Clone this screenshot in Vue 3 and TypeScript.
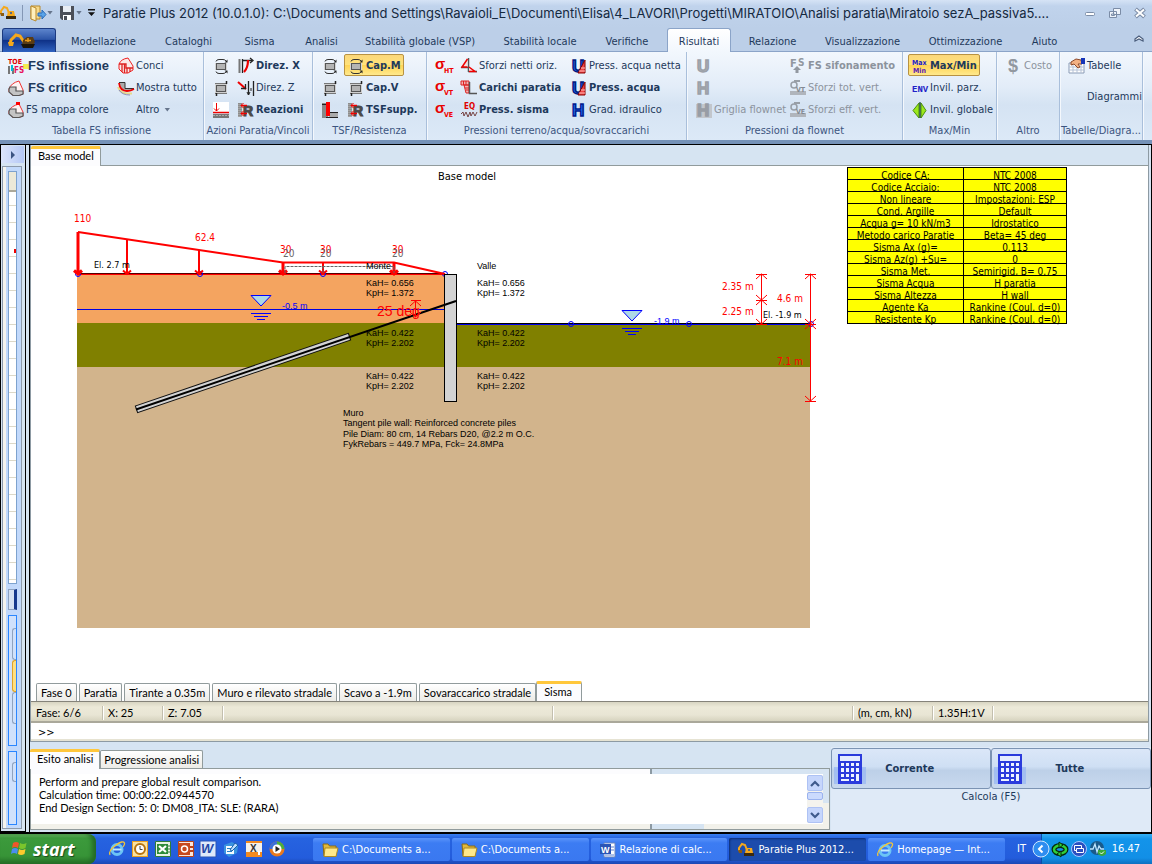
<script setup lang="ts">
import { ref } from 'vue'

interface RibbonItem {
  text?: string
  icon?: string
  title?: string
  bold?: boolean
  big?: boolean
  on?: boolean
  off?: boolean
  arrow?: boolean
  tall?: boolean
}
interface RibbonGroup {
  label: string
  key: string
  cols: RibbonItem[][]
}

const title =
  'Paratie Plus 2012 (10.0.1.0): C:\\Documents and Settings\\Ravaioli_E\\Documenti\\Elisa\\4_LAVORI\\Progetti\\MIRATOIO\\Analisi paratia\\Miratoio sezA_passiva5....'

const menuTabs = [
  'Modellazione', 'Cataloghi', 'Sisma', 'Analisi', 'Stabilità globale (VSP)', 'Stabilità locale',
  'Verifiche', 'Risultati', 'Relazione', 'Visualizzazione', 'Ottimizzazione', 'Aiuto',
]
const activeMenu = ref('Risultati')

const f = 'font-family="Liberation Sans" font-weight="bold"'
const fn = 'font-family="DejaVu Sans Condensed" font-weight="bold"'
const momentBox =
  '<path d="M2 5h12v7H2z" fill="#d4d4d4"/><rect x="3.500" y="5.500" width="9" height="6" fill="#b4b4b4" stroke="#555"/><path d="M3 3.500Q3.500 1.500 6 1.500H10Q12 1.500 13 3M3 13.500Q3.500 15.500 6 15.500H10Q12 15.500 13 14" fill="none" stroke="#333"/><path d="M14.500 1.500v3h-3zM14.500 15.500v-3h-3z" fill="#222"/>'
const shearBox =
  '<path d="M2 3h12v10H2z" fill="#cfcfcf"/><rect x="3.500" y="5.500" width="9" height="6" fill="#b4b4b4" stroke="#555"/><path d="M2 3.500H14M2 13.500H14" stroke="#777"/><path d="M13.500 1v3M3.500 13v3" stroke="#222" stroke-width="1.500"/>'
const reaction =
  '<path d="M0 1h4v14H0z" fill="#a4a4a4"/><path d="M1 1v14M3 1v14" stroke="#777" stroke-dasharray="1 1"/><text x="5" y="14" font-size="14" fill="#4a4a4a" stroke="#4a4a4a" ' + f + '>R</text><path d="M3 3.500H9M3 11.500H9" stroke="#e00" stroke-width="1.400"/><path d="M5.500 1 3 3.500 5.500 6M5.500 9 3 11.500 5.500 14" fill="none" stroke="#e00"/>'
const sigma = (s: string) =>
  `<text x="-1" y="11" font-size="15" fill="#e80000" ${f}>σ</text><text x="8" y="15" font-size="7" fill="#f00000" ${fn}>${s}</text>`
const letter = (c: string, fill: string, stroke: string) =>
  `<text x="1" y="14" font-size="17" fill="${fill}" stroke="${stroke}" stroke-width="1.500" ${f}>${c}</text>`

const icons: Record<string, string> = {
  toe: `<path d="M15 6h6v5h-6z" fill="#f2ee4e"/><text x="0" y="6" font-size="7" fill="#e00000" ${fn}>TOE</text><path d="M0 8h2v8H0zM4 10h2v6H4z" fill="#777"/><path d="M3 7h2v6H3z" fill="#0bd"/><text x="6" y="15" font-size="8" fill="#e8105a" ${fn}>FS</text>`,
  critico: '<path d="M1 9Q3 3 11 1L15 10V14L11 15.500H5L1 12Z" fill="#fdf3f3" stroke="#e33"/><path d="M2 7H8V11H15V14L11 15.500H5L1 12V9Z" fill="#c4c4c4" stroke="#555" stroke-width="1.200"/>',
  mappa: '<path d="M1 9Q3 4 11 2L15 10V14L11 15.500H5L1 12V9Z" fill="#fdf3f3" stroke="#e33"/><path d="M2 7H8V11H15V14L11 15.500H5L1 12V9Z" fill="#c4c4c4" stroke="#555" stroke-width="1.200"/><path d="M8 0h4v3H8z" fill="red"/>',
  conci: '<path d="M1 6Q3 1 10 0L15 8V12L10 15H5L1 11Z" fill="#fbe9e9" stroke="#e22"/><path d="M1 6H8V10H15M4 6V14M6.500 6V15M9 10V15M12 10V14" fill="none" stroke="#d22" stroke-width="1.300"/>',
  mostra: '<path d="M1 2H7V8H15V10Q9 13 5 10Q1 8 1 2" fill="#aaa"/><path d="M0 7Q3 13.500 9 13.500H14" fill="none" stroke="#e8d98a" stroke-width="2"/><path d="M1 2.500H7V8.500H16" fill="none" stroke="#333"/><path d="M1 3Q2 11 9 11Q13 11 16 9" fill="none" stroke="#e00" stroke-width="1.800"/><path d="M1 10Q4 15 12 15" fill="none" stroke="#8a90c0"/>',
  moment: momentBox,
  shear: shearBox,
  settle: '<path d="M0 0h16v11H0z" fill="#fff"/><path d="M0 10.500H16" stroke="#e00" stroke-width="1.500"/><path d="M3.500 1V9M1 6.500 3.500 9 6 6.500" fill="none" stroke="#e00"/><path d="M0 12h16v4H0z" fill="#777"/><path d="M0 13.500H16" stroke="#aaa" stroke-dasharray="2 1"/>',
  dirx: '<path d="M1.500 1V15" stroke="#777" stroke-width="2"/><path d="M4.500 1V15M4 2.500H14" stroke="#222" stroke-width="1.300"/><path d="M12 0 15 2.500 12 5" fill="none" stroke="#222" stroke-width="1.300"/><path d="M10 2Q10 10 6 14" fill="none" stroke="#e00" stroke-width="2.200"/>',
  dirz: '<path d="M0 2 8 9" stroke="#e00" stroke-width="2"/><path d="M3 8.500H7.500V4" fill="none" stroke="#222" stroke-width="1.300"/><path d="M10.500 1V15M15.500 1V16" stroke="#222" stroke-width="1.300"/><path d="M9 12 10.500 15 12 12M13 8v3" fill="none" stroke="#222"/>',
  react: reaction,
  tsf: '<path d="M0 1h6v15H0z" fill="#888"/><path d="M7 11h9v5H7z" fill="#aaa"/><path d="M4 0h4v14H4z" fill="red"/><path d="M0 2.500H4M8 10.500H16M4 15.500H16" stroke="#222"/>',
  sht: sigma('HT'),
  svt: sigma('VT'),
  sve: sigma('VE'),
  netti: '<path d="M7.500 0V14M0 9.500H7M7 13.500H16" stroke="#555" stroke-width="1.500"/><path d="M6.500 1 1 9H6.500M8 9 14 13.500H8" fill="#f6dddd" stroke="#e00" stroke-width="1.500"/>',
  carichi: '<path d="M0 1h8v4H0zM8 5h-5L5 13H8z" fill="#f2b4b4" stroke="#d22"/><path d="M2.500 1v4M5 1v4M4 8h4M5 10h3" stroke="#d22"/><path d="M8.500 2V13.500H16" fill="none" stroke="#555" stroke-width="1.500"/>',
  sismaI: `<text x="3" y="7" font-size="8" fill="#e00000" ${fn}>EQ</text><path d="M0 12l2-2 1 4 2-4 2 5 2-5 1 4 2-4 2 4 2-4" fill="none" stroke="#744"/>`,
  u: letter('U', '#2468f0', '#001a80') + '<path d="M14 2V15H7z" fill="#e44" stroke="#800"/><path d="M10 10h4M8 13h6" stroke="#fbb"/>',
  h: letter('H', '#2a7cff', '#001a90'),
  uOff: letter('U', '#a8adb4', '#9ba0a8'),
  hOff: letter('H', '#a8adb4', '#9ba0a8'),
  grid: '<path d="M0 2h16v14H0z" fill="#c2c6cc"/>' + letter('H', '#989da5', '#989da5'),
  fsOff: `<text x="0" y="9" font-size="11" fill="#9298a0" ${fn}>F</text><text x="8" y="8" font-size="10" fill="#9298a0" ${fn}>S</text><path d="M7 8 11 12H8.500V15H5.500V12H3z" fill="#9298a0"/>`,
  svtOff: `<path d="M0 11h16v4H0z" fill="#b0b5bc"/><circle cx="4" cy="5" r="3" fill="none" stroke="#989ea6" stroke-width="1.500"/><path d="M4 1h6" stroke="#989ea6" stroke-width="2"/><text x="6" y="12" font-size="7" fill="#848a92" ${fn}>VT</text>`,
  sveOff: `<path d="M0 11h16v4H0z" fill="#b0b5bc"/><circle cx="4" cy="5" r="3" fill="none" stroke="#989ea6" stroke-width="1.500"/><path d="M4 1h6" stroke="#989ea6" stroke-width="2"/><text x="6" y="12" font-size="7" fill="#848a92" ${fn}>VE</text>`,
  maxmin: `<text x="0" y="7" font-size="7" fill="#2222c8" ${fn}>Max</text><text x="1" y="15" font-size="7" fill="#5a20b8" ${fn}>Min</text>`,
  env: '<text x="0" y="12" font-size="9" fill="#2222c8" font-family="Liberation Mono" font-weight="bold">ENV</text>',
  invil: '<path d="M7 1 1 8.500 7 16zM9 1 14 8.500 9 16z" fill="#9be81c" stroke="#4b8f10"/><path d="M8 0V16" stroke="#142" stroke-width="1.200"/>',
  dollar: `<text x="2" y="14" font-size="18" fill="#9298a0" ${f}>$</text>`,
  tabella: '<path d="M0 5h15v10H0z" fill="#fff" stroke="#8a9bb5"/><path d="M0 9H15M0 12H15M4 5V15M8 5V15M12 5V15" stroke="#b5c2d6"/><path d="M2 4 7 1 12 2 13 6 9 6 11 9 9 10 5 6 2 7z" fill="#f3b183" stroke="#8c4a2c"/><path d="M12 0h4v6h-4z" fill="#1535b8"/>',
}

const ribbon: RibbonGroup[] = [
  { key: 'g1', label: 'Tabella FS infissione', cols: [
    [{ icon: 'toe', text: 'FS infissione', bold: true, big: true }, { icon: 'critico', text: 'FS critico', bold: true, big: true }, { icon: 'mappa', text: 'FS mappa colore' }],
    [{ icon: 'conci', text: 'Conci' }, { icon: 'mostra', text: 'Mostra tutto' }, { icon: 'none', text: 'Altro', arrow: true }],
  ] },
  { key: 'g2', label: 'Azioni Paratia/Vincoli', cols: [
    [{ icon: 'moment', title: 'Momento' }, { icon: 'shear', title: 'Taglio' }, { icon: 'settle', title: 'Cedimento' }],
    [{ icon: 'dirx', text: 'Direz. X', bold: true }, { icon: 'dirz', text: 'Direz. Z' }, { icon: 'react', text: 'Reazioni', bold: true }],
  ] },
  { key: 'g3', label: 'TSF/Resistenza', cols: [
    [{ icon: 'moment', title: 'Momento' }, { icon: 'shear', title: 'Taglio' }, { icon: 'tsf', title: 'TSF' }],
    [{ icon: 'moment', text: 'Cap.M', bold: true, on: true }, { icon: 'shear', text: 'Cap.V', bold: true }, { icon: 'react', text: 'TSFsupp.', bold: true }],
  ] },
  { key: 'g4', label: 'Pressioni terreno/acqua/sovraccarichi', cols: [
    [{ icon: 'sht', title: 'Sigma HT' }, { icon: 'svt', title: 'Sigma VT' }, { icon: 'sve', title: 'Sigma VE' }],
    [{ icon: 'netti', text: 'Sforzi netti oriz.' }, { icon: 'carichi', text: 'Carichi paratia', bold: true }, { icon: 'sismaI', text: 'Press. sisma', bold: true }],
    [{ icon: 'u', text: 'Press. acqua netta' }, { icon: 'u', text: 'Press. acqua', bold: true }, { icon: 'h', text: 'Grad. idraulico' }],
  ] },
  { key: 'g5', label: 'Pressioni da flownet', cols: [
    [{ icon: 'uOff', title: 'U', off: true }, { icon: 'hOff', title: 'H', off: true }, { icon: 'grid', text: 'Griglia flownet', off: true }],
    [{ icon: 'fsOff', text: 'FS sifonamento', bold: true, off: true }, { icon: 'svtOff', text: 'Sforzi tot. vert.', off: true }, { icon: 'sveOff', text: 'Sforzi eff. vert.', off: true }],
  ] },
  { key: 'g6', label: 'Max/Min', cols: [
    [{ icon: 'maxmin', text: 'Max/Min', bold: true, on: true }, { icon: 'env', text: 'Invil. parz.' }, { icon: 'invil', text: 'Invil. globale' }],
  ] },
  { key: 'g7', label: 'Altro', cols: [[{ icon: 'dollar', text: 'Costo', off: true }]] },
  { key: 'g8', label: 'Tabelle/Diagra...', cols: [[{ icon: 'tabella', text: 'Tabelle' }, { icon: 'none', text: 'Diagrammi', tall: true }]] },
]

const settings: [string, string][] = [
  ['Codice CA:', 'NTC 2008'],
  ['Codice Acciaio:', 'NTC 2008'],
  ['Non lineare', 'Impostazioni: ESP'],
  ['Cond. Argille', 'Default'],
  ['Acqua g= 10 kN/m3', 'Idrostatico'],
  ['Metodo carico Paratie', 'Beta= 45 deg'],
  ['Sisma Ax (g)=', '0.113'],
  ['Sisma Az(g) +Su=', '0'],
  ['Sisma Met.', 'Semirigid, B= 0.75'],
  ['Sisma Acqua', 'H paratia'],
  ['Sisma Altezza', 'H wall'],
  ['Agente Ka', 'Rankine (Coul. d=0)'],
  ['Resistente Kp', 'Rankine (Coul. d=0)'],
]

const stages = ['Fase 0', 'Paratia', 'Tirante a 0.35m', 'Muro e rilevato stradale', 'Scavo a -1.9m', 'Sovaraccarico stradale', 'Sisma']
const activeStage = ref('Sisma')

const loadArrows = [
  { x: 78, top: 232, w: 3 },
  { x: 127, top: 239, w: 2 },
  { x: 199, top: 250, w: 2 },
  { x: 283, top: 262, w: 3 },
  { x: 323, top: 262, w: 2 },
  { x: 394, top: 262, w: 3 },
]
const coefficients = [
  { y: 286, a: 'KaH= 0.656', p: 'KpH= 1.372' },
  { y: 336, a: 'KaH= 0.422', p: 'KpH= 2.202' },
  { y: 379, a: 'KaH= 0.422', p: 'KpH= 2.202' },
]
const wallNotes = [
  'Muro',
  'Tangent pile wall: Reinforced concrete piles',
  'Pile Diam: 80 cm, 14 Rebars D20, @2.2 m O.C.',
  'FykRebars = 449.7 MPa, Fck= 24.8MPa',
]
const waterMarks = [{ x: 261, y: 295 }, { x: 632, y: 310 }]
const crosses = [
  { x: 761, y: 274, up: true, down: false },
  { x: 761, y: 300, up: true, down: true },
  { x: 761, y: 324, up: false, down: true },
  { x: 810, y: 274, up: true, down: false },
  { x: 810, y: 324, up: true, down: true },
  { x: 810, y: 401, up: false, down: true },
]

const ie =
  '<circle cx="8" cy="8.500" r="5" fill="none" stroke="#6cc4f5" stroke-width="3"/><path d="M4 8.500H12.500" stroke="#bfe8ff" stroke-width="2"/><path d="M1 14Q-1 10 7 4Q14 -1 15.500 2Q16 3 14 6" fill="none" stroke="#f3c63a" stroke-width="1.300"/>'
const folder =
  '<path d="M1 2h5l1.500 2H14v10H2z" fill="#e2b93c" stroke="#8a6a14"/><path d="M3 6h13l-2 8.500H2z" fill="#ffe88a" stroke="#b08a20"/>'
const digger =
  '<path d="M1 9 1 6 4 2 7 3 9 8" fill="none" stroke="#f5a81c" stroke-width="2"/><path d="M0 8h4v3H1z" fill="#8a5a10"/><path d="M8 6h6l1 5H7z" fill="#f5a81c"/><path d="M10 7h2v2h-2z" fill="#5a6a80"/><path d="M6 11h10v3H6z" fill="#3a2a10"/>'
const word =
  '<path d="M4 1h11v14H4z" fill="#fff" stroke="#6a86c0"/><path d="M11 5h3M11 8h3M5 13h9" stroke="#5b7fd0"/><path d="M0 2h11v10H0z" fill="#2a55b5"/><text x="1" y="10.500" font-size="9" fill="#fff" font-family="Liberation Sans" font-weight="bold">W</text>'

const quick = [
  { name: 'Internet Explorer', svg: ie },
  { name: 'Outlook', svg: '<path d="M0 0h16v16H0z" fill="#e9a023"/><path d="M1 1h14v14H1z" fill="#fbe2a0"/><circle cx="8" cy="8" r="5" fill="#fff" stroke="#b87410" stroke-width="2"/><path d="M8 5V8.500H10.500" fill="none" stroke="#444"/>' },
  { name: 'Excel', svg: '<path d="M.5 .5h15v15H.5z" fill="#e6f2e2" stroke="#2f7d3a"/><path d="M2 3h11v10H2z" fill="#2e8b3a"/><path d="M4 5 11 11M11 5 4 11" stroke="#fff" stroke-width="2.200"/><path d="M13 5h2M13 8h2M13 11h2" stroke="#2f7d3a"/>' },
  { name: 'PowerPoint', svg: '<path d="M.5 .5h15v15H.5z" fill="#fbe6da" stroke="#b8431c"/><path d="M1 2h11v12H1z" fill="#c74a1f"/><circle cx="6.500" cy="8" r="3" fill="none" stroke="#fff" stroke-width="1.500"/><path d="M12 6h3M12 10h3" stroke="#b8431c" stroke-width="2"/>' },
  { name: 'Word', svg: '<path d="M0 0h16v16H0z" fill="#dfe9fa" stroke="#2a55b5"/><text x="1" y="12" font-size="13" font-style="italic" fill="#2448a8" font-family="Liberation Sans" font-weight="bold">W</text>' },
  { name: 'Desktop', svg: '<path d="M1 4 9 1 15 5 14 12 6 16 1 12z" fill="#3a93e0"/><path d="M3 5h8v8H3z" fill="#f4faff"/><path d="M4 7.500h5M4 10.500h5" stroke="#2a80c8"/><path d="M7 9 12 2 15 4 9 10z" fill="#bfe0ff" stroke="#1a60a8"/>' },
  { name: 'X', svg: '<path d="M0 0h16v16H0z" fill="#f58a1f"/><path d="M0 2h16v9H0z" fill="#f6f2ea"/><text x="4" y="11" font-size="10" fill="#333" font-family="Liberation Sans" font-weight="bold">X</text><path d="M12 10h2v4h-2z" fill="#fff"/>' },
  { name: 'Media Player', svg: '<circle cx="8" cy="8" r="7.500" fill="#e8791f"/><path d="M8 .5A7.500 7.500 0 0 1 15.500 8H8z" fill="#4bae3c"/><path d="M.5 8A7.500 7.500 0 0 1 8 .5V8z" fill="#3a6fd8"/><circle cx="8" cy="8" r="4.500" fill="#fff"/><path d="M6.500 5 11 8 6.500 11z" fill="#222"/>' },
]
const tasks = [
  { text: 'C:\\Documents a...', svg: folder, on: false },
  { text: 'C:\\Documents a...', svg: folder, on: false },
  { text: 'Relazione di calc...', svg: word, on: false },
  { text: 'Paratie Plus 2012...', svg: digger, on: true },
  { text: 'Homepage — Int...', svg: ie, on: false },
]
const tray = [
  { name: 'Espandi', svg: '<circle cx="8" cy="8" r="8" fill="#2f8df0" stroke="#cfe6ff"/><path d="M9.500 4.500 6 8 9.500 11.500" fill="none" stroke="#fff" stroke-width="2"/>' },
  { name: 'Rete', svg: '<ellipse cx="8" cy="8.500" rx="6" ry="4" fill="none" stroke="#062a0a" stroke-width="5"/><ellipse cx="8" cy="8.500" rx="6" ry="4" fill="none" stroke="#2fd03a" stroke-width="2.500"/><path d="M7 1 11 4 7 7zM9 16 5 13l4-3z" fill="#2fd03a" stroke="#062a0a" stroke-width="1"/>' },
  { name: 'Finestre', svg: '<circle cx="8" cy="8" r="7.500" fill="#2a4fc0" stroke="#a8c8ff"/><path d="M3.500 4.500h7v5h-7z" fill="#2a4fc0" stroke="#fff"/><path d="M5.500 7.500h7v4h-7z" fill="#2a4fc0" stroke="#fff"/>' },
  { name: 'Monitor', svg: '<circle cx="7" cy="7" r="7" fill="#1a5a8a"/><path d="M0 8h3l2-5 2 8 2-6 2 3h3" fill="none" stroke="#bfe6ff" stroke-width="1.300"/><path d="M8 9h8v4q-4 4-8 0z" fill="#3aa83a"/><path d="M10 11.500l1.500 1.500L14 10.500" fill="none" stroke="#fff"/>' },
]
const calc =
  '<path d="M0 14h32v17H0z" fill="#8fb0f5" opacity=".6"/><path d="M4 1h24v30H4z" fill="#2b3bdc"/><path d="M6 3h20v5H6z" fill="#e6edff"/><g fill="#eef3ff"><path d="M7 10h3v3H7zM12 10h3v3h-3zM17 10h3v3h-3zM22 10h3v3h-3zM7 15h3v4H7zM12 15h3v4h-3zM17 15h3v4h-3zM22 15h3v4h-3zM7 21h3v3H7zM12 21h3v3h-3zM17 21h3v3h-3zM22 21h3v7h-3zM7 26h8v2H7zM17 26h3v2h-3z"/></g>'
</script>

<template>
  <div class="desktop">
    <header class="titlebar">
      <svg class="ico" viewBox="0 0 16 16" v-html="digger"></svg>
      <span class="bar"></span>
      <button class="qa" aria-label="Apri">
        <svg class="ico" viewBox="0 0 16 16"><path d="M1 1h9v13H1z" fill="#f6d98a" stroke="#b98a2c" /><path d="M1 1 6 3V16L1 14z" fill="#fff0bd" stroke="#b98a2c" /><path d="M8 8h4V5l4 4.500-4 4.500v-3H8z" fill="#5aa4e8" stroke="#2a6cb8" /></svg>
        <i class="caret"></i>
      </button>
      <button class="qa" aria-label="Salva">
        <svg class="ico" viewBox="0 0 16 16"><path d="M1 1h14v14H3L1 13z" fill="#4b4f58" /><path d="M4 1h8v6H4z" fill="#e8edf4" /><path d="M4 10h8v5H4z" fill="#fff" /><path d="M5 11h3v4H5z" fill="#4b4f58" /></svg>
        <i class="caret"></i>
      </button>
      <button class="qa more" aria-label="Personalizza"><i class="caret dark"></i></button>
      <h1>{{ title }}</h1>
      <div class="winctl">
        <button aria-label="Riduci"><svg class="ico" viewBox="0 0 16 16"><rect x="3.500" y="7.500" width="9" height="3" rx="1" fill="#fff" stroke="#7b8ca6" /></svg></button>
        <button aria-label="Ripristina"><svg class="ico" viewBox="0 0 16 16"><path d="M6.500 3.500h7v6h-7zM2.500 6.500h7v6h-7z" fill="#eef3fa" stroke="#7b8ca6" /><path d="M4.500 9h3v1.500h-3z" fill="none" stroke="#7b8ca6" /></svg></button>
        <button aria-label="Chiudi"><svg class="ico" viewBox="0 0 16 16"><path d="M3.500 4 12.500 12M12.500 4 3.500 12" stroke="#7b8ca6" stroke-width="4" /><path d="M4 4.500 12 11.500M12 4.500 4 11.500" stroke="#fff" stroke-width="2" /></svg></button>
      </div>
    </header>

    <nav class="menu">
      <button class="appbtn" aria-label="Menu applicazione">
        <svg viewBox="0 0 28 18" width="28" height="18"><path d="M2 12 3 8 8 3 12 4 16 10" fill="none" stroke="#f5a81c" stroke-width="3" /><path d="M0 10l6 0-1 4-4 0z" fill="#f5a81c" /><path d="M15 8l4-3h6l2 5-2 3H14z" fill="#5a3c14" /><path d="M13 12h14l-2 4H15z" fill="#1c1408" /><path d="M17 8.500h6M20 6v4" stroke="#e89a18" stroke-width="1.500" /></svg>
      </button>
      <div class="tabs">
        <button v-for="t in menuTabs" :key="t" :class="{ active: t === activeMenu }" @click="activeMenu = t"><span>{{ t }}</span></button>
      </div>
      <button class="fold" aria-label="Comprimi">
        <svg viewBox="0 0 10 8" width="10" height="8"><path d="M1 4 5 1 9 4V6L5 4 1 6Z" fill="#fff" stroke="#4a5d7c" stroke-width="1.200" /></svg>
      </button>
    </nav>

    <div class="ribbon">
      <section v-for="g in ribbon" :key="g.key" class="group" :class="g.key">
        <div class="cols">
          <div v-for="(col, ci) in g.cols" :key="ci" class="col">
            <button
              v-for="(it, ii) in col"
              :key="ii"
              class="cmd"
              :class="{ bold: it.bold, big: it.big, on: it.on, tall: it.tall }"
              :disabled="it.off"
              :aria-label="it.title"
            >
              <svg class="ico" viewBox="0 0 16 16" v-html="icons[it.icon ?? 'none'] ?? ''"></svg>
              <span v-if="it.text">{{ it.text }}</span>
              <i v-if="it.arrow" class="caret"></i>
            </button>
          </div>
        </div>
        <div class="glabel">{{ g.label }}</div>
      </section>
    </div>

    <main class="work">
      <aside class="side">
        <button class="expand" aria-label="Espandi pannello"><svg viewBox="0 0 6 8" width="6" height="8"><path d="M1 0 5 4 1 8z" fill="#3b5482" /></svg></button>
        <div class="rail">
          <div class="ruler"><span class="knob"></span><span class="mark"></span></div>
          <div class="stub"></div>
          <div class="box long"><span></span><span class="gold"></span><span></span></div>
          <div class="box short"><span></span></div>
        </div>
      </aside>

      <div class="main">
        <section class="model">
          <div class="strip"><button class="xtab active">Base model</button></div>
          <div class="canvas">
            <svg class="drawing">
              <g transform="translate(-31,-166)">
                <rect x="77" y="274" width="368" height="49" fill="#f4a460" />
                <rect x="77" y="323" width="733" height="44" fill="#808000" />
                <rect x="77" y="367" width="733" height="261" fill="#d2b48c" />
                <path d="M77 309.500H445" stroke="#0000e0" />
                <path d="M457 323.500H810" stroke="#000" />
                <path d="M457 324.500H810" stroke="#0000f0" />
                <path d="M77 273.500H445" stroke="#500" />
                <path d="M77 274.500H445" stroke="#f00" />
                <g fill="none" stroke="#00f">
                  <circle v-for="x in [78, 200, 323]" :key="x" :cx="x" cy="274" r="2.500" />
                  <circle cx="445" cy="274" r="2.500" />
                  <circle cx="571" cy="324" r="2.500" />
                  <circle cx="689" cy="324" r="2.500" />
                  <circle cx="811" cy="324" r="2.500" />
                </g>
                <path d="M78 232 283 262.500H394L445 274" fill="none" stroke="#f00" stroke-width="2" />
                <g stroke="#f00" fill="none">
                  <path v-for="a in loadArrows" :key="a.x" :d="`M${a.x} ${a.top}V274M${a.x - 4} 270.500L${a.x} 274L${a.x + 4} 270.500`" :stroke-width="a.w" />
                </g>
                <path d="M285 273V266.500H394V273M323 266V273" fill="none" stroke="#666" stroke-dasharray="3 1" />
                <g class="dim red">
                  <text x="74" y="222">110</text>
                  <text x="195" y="241">62.4</text>
                  <text x="280" y="253">30</text>
                  <text x="320" y="253">30</text>
                  <text x="392" y="253">30</text>
                  <text x="722" y="290">2.35 m</text>
                  <text x="722" y="315">2.25 m</text>
                  <text x="777" y="302">4.6 m</text>
                  <text x="777" y="365">7.1 m</text>
                </g>
                <g class="dim grey">
                  <text x="283" y="257">20</text>
                  <text x="320" y="257">20</text>
                  <text x="392" y="257">20</text>
                </g>
                <rect x="444.500" y="274.500" width="12" height="127" fill="#d3d3d3" stroke="#000" />
                <path d="M136 409.500 350 336.500" stroke="#111" stroke-width="8" />
                <path d="M137 409.200 349 336.800" stroke="#d3d3d3" stroke-width="6" />
                <path d="M136 409.500 456 301" stroke="#000" stroke-width="2" />
                <g v-for="w in waterMarks" :key="w.x" stroke="#00f">
                  <path :d="`M${w.x - 10} ${w.y}.500H${w.x + 10}L${w.x} ${w.y + 11}Z`" fill="#add8e6" />
                  <path :d="`M${w.x - 10} ${w.y + 18}.500h20M${w.x - 7} ${w.y + 21}.500h14M${w.x - 4} ${w.y + 24}.500h8`" />
                </g>
                <g class="note blue"><text x="282" y="309">-0.5 m</text><text x="654" y="324">-1.9 m</text></g>
                <g stroke="#f00" fill="none">
                  <path d="M761.500 274V324M810.500 274V401" />
                  <template v-for="(c, i) in crosses" :key="i">
                    <path :d="`M${c.x - 5} ${c.y}.500h11`" />
                    <path v-if="c.up" :d="`M${c.x - 5} ${c.y + 5}L${c.x + 0.5} ${c.y}L${c.x + 6} ${c.y + 5}`" />
                    <path v-if="c.down" :d="`M${c.x - 5} ${c.y - 5}L${c.x + 0.5} ${c.y}L${c.x + 6} ${c.y - 5}`" />
                  </template>
                  <path d="M411 300.500H421M415.500 300V317M410 306 415.500 301 421 306M410 312 415.500 317 421 312" />
                </g>
                <text class="angle" x="377" y="316">25 deg</text>
                <g class="elev"><text x="94" y="268">El. 2.7 m</text><text x="763" y="318">El. -1.9 m</text></g>
                <g class="note">
                  <text x="366" y="269">Monte</text>
                  <text x="477" y="269">Valle</text>
                  <template v-for="k in coefficients" :key="k.y">
                    <text x="366" :y="k.y">{{ k.a }}</text><text x="366" :y="k.y + 10">{{ k.p }}</text>
                    <text x="477" :y="k.y">{{ k.a }}</text><text x="477" :y="k.y + 10">{{ k.p }}</text>
                  </template>
                  <text v-for="(n, i) in wallNotes" :key="n" x="343" :y="416 + Math.round(i * 10.4)">{{ n }}</text>
                </g>
                <text class="heading" x="438" y="180">Base model</text>
              </g>
            </svg>
            <table class="settings">
              <tbody>
                <tr v-for="(r, i) in settings" :key="i"><th scope="row"><div>{{ r[0] }}</div></th><td><div>{{ r[1] }}</div></td></tr>
              </tbody>
            </table>
          </div>
          <div class="stages">
            <button v-for="s in stages" :key="s" class="xtab" :class="{ active: s === activeStage }" @click="activeStage = s">{{ s }}</button>
          </div>
          <div class="status">
            <span class="s1">Fase: 6/6</span><span class="s2">X: 25</span><span class="s3">Z: 7.05</span><span class="s4"></span><span class="s5"></span><span class="s6">(m, cm, kN)</span><span class="s7">1.35H:1V</span><span></span>
          </div>
          <input class="prompt" aria-label="Comando" value="&gt;&gt;" />
        </section>

        <div class="bottom">
          <section class="output">
            <div class="strip low"><button class="xtab active">Esito analisi</button><button class="xtab">Progressione analisi</button></div>
            <div class="log">
              <div class="lines">
                <p>Perform and prepare global result comparison.</p>
                <p>Calculation time: 00:00:22.0944570</p>
                <p>End Design Section: 5: 0: DM08_ITA: SLE: (RARA)</p>
              </div>
              <div class="scroll">
                <button aria-label="Su"><svg viewBox="0 0 10 7" width="10" height="7"><path d="M1 6 5 2 9 6" fill="none" stroke="#3f5a8c" stroke-width="2.200" /></svg></button>
                <span class="thumb"></span>
                <button aria-label="Giù"><svg viewBox="0 0 10 7" width="10" height="7"><path d="M1 1 5 5 9 1" fill="none" stroke="#3f5a8c" stroke-width="2.200" /></svg></button>
              </div>
            </div>
          </section>
          <section class="run">
            <div class="runbtns">
              <button><svg viewBox="0 0 32 32" width="32" height="32" v-html="calc"></svg><span>Corrente</span></button>
              <button><svg viewBox="0 0 32 32" width="32" height="32" v-html="calc"></svg><span>Tutte</span></button>
            </div>
            <div class="runlabel">Calcola (F5)</div>
          </section>
        </div>
      </div>
    </main>

    <footer class="taskbar">
      <button class="start">
        <svg viewBox="0 0 18 18" width="18" height="18"><path d="M3 3Q6 1 9 3L8 8Q5 6 2 8z" fill="#f0562a" /><path d="M10 3Q13 5 16.500 3L15.500 8Q12 10 9 8z" fill="#7bc52c" /><path d="M2 9Q5 7 8 9L7 14Q4 12 1 14z" fill="#4a8df0" /><path d="M9 9Q12 11 15.500 9L14.500 14Q11 16 8 14z" fill="#fbca2d" /></svg>
        <span>start</span>
      </button>
      <div class="quick"><button v-for="q in quick" :key="q.name" :aria-label="q.name"><svg class="ico" viewBox="0 0 16 16" v-html="q.svg"></svg></button></div>
      <div class="tasks">
        <button v-for="(t, i) in tasks" :key="i" :class="{ on: t.on }"><svg class="ico" viewBox="0 0 16 16" v-html="t.svg"></svg><span>{{ t.text }}</span></button>
      </div>
      <span class="lang">IT</span>
      <div class="tray">
        <svg v-for="t in tray" :key="t.name" class="ico" viewBox="0 0 16 16" role="img" :aria-label="t.name" v-html="t.svg"></svg>
        <time>16.47</time>
      </div>
    </footer>
  </div>
</template>

<style>
body {
  margin: 0;
  background: #bccfe8;
}
</style>

<style scoped>
.desktop {
  --ui: 'DejaVu Sans Condensed', 'DejaVu Sans', sans-serif;
  --ms: 'Liberation Sans', Arial, sans-serif;
  --panel: Lato, 'Liberation Sans', sans-serif;
  display: flex;
  flex-direction: column;
  min-height: 100vh;
  background: #bccfe8;
  font: 11px/14px var(--ui);
  color: #1e395b;
  white-space: nowrap;
}
.desktop *,
.desktop *::before {
  box-sizing: border-box;
}
button {
  font: inherit;
  color: inherit;
  background: none;
  border: 0;
  padding: 0;
  margin: 0;
}
svg {
  display: block;
  flex: none;
  overflow: visible;
}
.ico {
  width: 16px;
  height: 16px;
}
.caret {
  width: 6px;
  height: 4px;
  flex: none;
  background: #66758c;
  clip-path: polygon(0 0, 100% 0, 50% 100%);
}

/* title bar */
.titlebar {
  display: flex;
  align-items: center;
  height: 28px;
  padding: 0 4px 3px 0;
  background: linear-gradient(#d5e3f5 0, #c0d3ec 6px, #bccfe8);
}
.bar {
  width: 1px;
  height: 16px;
  margin: 0 7px 0 6px;
  background: #8497b5;
}
.qa {
  display: flex;
  align-items: center;
  gap: 1px;
  margin-right: 6px;
}
.more {
  margin-right: 8px;
}
.dark {
  width: 7px;
  height: 7px;
  background: #111;
  clip-path: polygon(0 0, 100% 0, 100% 20%, 0 20%, 0 45%, 100% 45%, 50% 100%, 0 45%);
}
h1 {
  flex: 1;
  min-width: 0;
  margin: 0;
  font: 13px/20px Inter, sans-serif;
  color: #15293f;
}
.winctl {
  display: flex;
  gap: 9px;
}

/* menu row */
.menu {
  display: grid;
  grid-template-columns: 57px minmax(0, 1016fr) minmax(0, 79fr);
  height: 24px;
  border-bottom: 1px solid #8ba4c8;
}
.appbtn {
  margin: 0 1px 0 2px;
  padding-left: 5px;
  border: 1px solid #1c3a80;
  border-bottom: 0;
  border-radius: 3px 3px 0 0;
  background: linear-gradient(#5d84cc, #2c55a8 45%, #0f3288 50%, #2f62c0);
}
.tabs {
  display: grid;
  grid-template-columns: 93fr 77fr 65fr 59fr 138fr 102fr 72fr 72fr 75fr 105fr 101fr 57fr;
}
.tabs button {
  display: flex;
  align-items: center;
  justify-content: center;
  min-width: 0;
  padding-top: 3px;
}
.tabs .active {
  height: 24px;
  margin: 0 4px;
  border: 1px solid #8ba4c8;
  border-bottom: 0;
  border-radius: 3px 3px 0 0;
  background: linear-gradient(#fff, #f2f7fd);
}
.fold {
  display: flex;
  align-items: center;
  justify-content: flex-end;
  padding: 0 8px 2px 0;
}

/* ribbon */
.ribbon {
  display: grid;
  grid-template-columns: 204fr 109fr 114fr 260fr 216fr 94fr 63fr 83fr 9fr;
  height: 92px;
  border-bottom: 4px solid #7592b8;
  background: linear-gradient(#f2f7fd, #e2ecf8 40%, #d5e3f3 60%, #dce9f7);
}
.group {
  display: flex;
  flex-direction: column;
  justify-content: space-between;
  min-width: 0;
  border-right: 1px solid #a9bfdb;
  box-shadow: 1px 0 #f4f8fd;
}
.cols {
  display: flex;
  padding: 2px 0 0 5px;
}
.g1 .cols {
  padding-left: 4px;
}
.g1 .col:first-child {
  width: 110px;
}
.g2 .col:first-child,
.g3 .col:first-child,
.g4 .col:first-child {
  width: 25px;
}
.g3 .col:first-child {
  width: 26px;
}
.g4 .col:nth-child(2) {
  width: 110px;
}
.g5 .col:first-child {
  width: 94px;
}
.cmd {
  display: flex;
  align-items: center;
  gap: 2px;
  height: 22px;
  padding: 1px 2px 0 3px;
  border: 1px solid transparent;
  border-radius: 2px;
}
.cmd .caret {
  margin-left: 3px;
}
.cmd.bold {
  font-weight: bold;
}
.cmd.big {
  gap: 4px;
  font-family: var(--ms);
  font-size: 13px;
}
.cmd.on {
  border-color: #b89242;
  background: linear-gradient(#fbd77a, #ffe27a 50%, #ffd456 52%, #ffe98c);
}
.cmd.tall {
  height: 40px;
}
.cmd:disabled {
  color: #8c939d;
}
.glabel {
  padding-bottom: 2px;
  text-align: center;
  color: #3c5580;
  overflow: hidden;
}

/* workspace */
.work {
  flex: 1;
  display: flex;
  gap: 3px;
  background: #d6e4f2;
  border-top: 1px solid #000;
  border-bottom: 2px solid #000;
}
.side {
  display: flex;
  flex-direction: column;
  gap: 3px;
  width: 26px;
  border: 1px solid #000;
  border-top: 0;
}
.expand {
  display: flex;
  align-items: center;
  justify-content: center;
  height: 17px;
  margin: 1px 1px 0 0;
  background: linear-gradient(90deg, #dce5fb, #b5c8f5);
}
.rail {
  flex: 1;
  display: flex;
  flex-direction: column;
  gap: 5px;
  margin: 0 3px 2px 1px;
  padding: 4px 3px 3px 5px;
  border: 1px solid #8d9aab;
  background: linear-gradient(90deg, #f4f3ee 3px, #c2d9fb 3px);
}
.ruler {
  flex: 1;
  width: 9px;
  border: 1px solid #7da2ce;
  background: repeating-linear-gradient(#fff 0 16px, #dcd8c8 16px 17px);
}
.knob,
.mark {
  display: block;
}
.knob {
  height: 20px;
  background: #ece9d8;
  border-bottom: 2px solid #aca899;
}
.mark {
  width: 2px;
  height: 4px;
  margin: 57px 0 0 5px;
  background: #e00;
}
.stub {
  width: 9px;
  height: 21px;
  border: 1px solid #8ea3c2;
  border-right: 3px solid #16388c;
  background: #d5e1f2;
}
.box {
  width: 9px;
  border: 1px solid #2a86ff;
  background: #d0e1fb;
}
.long {
  height: 131px;
  padding: 12px 0 2px 3px;
}
.short {
  height: 74px;
  padding: 10px 0 0 3px;
}
.box span {
  display: block;
  height: 32px;
  border: 1px solid #8fa3bf;
  border-right: 0;
  border-radius: 3px 0 0 3px;
}
.short span {
  height: 20px;
}
.box .gold {
  border-color: #e0a428;
  background: #ffdf80;
}
.main {
  flex: 1;
  min-width: 0;
  display: flex;
  flex-direction: column;
  gap: 5px;
  border-left: 1px solid #000;
  border-right: 1px solid #000;
  font-family: var(--panel);
  color: #000;
}
.model {
  flex: 1;
  display: flex;
  flex-direction: column;
  margin-right: 2px;
  border: 1px solid #8d9aa3;
  border-top: 0;
}
.strip {
  display: flex;
  align-items: flex-end;
  height: 21px;
  background: #d6e4f2;
  border-bottom: 1px solid #919b9c;
}
.xtab {
  height: 17px;
  padding: 0 3px;
  border: 1px solid #919b9c;
  border-bottom: 0;
  border-radius: 2px 2px 0 0;
  background: linear-gradient(#fff, #ecebe6);
}
.xtab.active {
  border-top: 3px solid #ffc73c;
  background: #fcfcfe;
}
.strip .active {
  height: 20px;
  margin-bottom: -1px;
  padding: 0 6px 5px 7px;
  border-left: 0;
}
.canvas {
  flex: 1;
  position: relative;
  background: #fff;
}
.drawing {
  width: 100%;
  height: 100%;
  position: absolute;
  overflow: hidden;
}
.dim {
  font: 10px var(--ui);
}
.red,
.angle {
  fill: #f00;
}
.grey {
  fill: #666;
}
.blue {
  fill: #00f;
}
.note {
  font: 9px var(--ms);
}
.elev {
  font: 9px var(--ui);
}
.angle {
  font: 14px var(--ms);
}
.heading {
  font: 11px var(--ui);
}
.settings {
  position: absolute;
  top: 1px;
  right: 81px;
  width: 220px;
  table-layout: fixed;
  border-collapse: collapse;
  background: #ff0;
  font: 10px/16px var(--ui);
  text-align: center;
}
.settings th,
.settings td {
  padding: 0;
  border: 1px solid #000;
  font-weight: normal;
}
.settings th {
  width: 116px;
}
.settings div {
  height: 11px;
}
.stages {
  display: flex;
  align-items: flex-end;
  gap: 2px;
  height: 22px;
  padding-left: 5px;
  background: #fff;
  border-bottom: 1px solid #85837a;
}
.stages .xtab {
  height: 18px;
  padding: 0 4px;
}
.stages .active {
  height: 20px;
  padding: 0 9px 2px 7px;
  margin-left: -2px;
}
.status {
  display: flex;
  align-items: center;
  height: 21px;
  padding: 2px 0 0 5px;
  border-bottom: 2px solid #aaa89a;
  background: linear-gradient(#d8d5c2, #ece9d8 5px, #e8e5d4 13px, #d6d3bf);
}
.status span {
  height: 14px;
  padding-left: 5px;
}
.status span:not(:last-child) {
  border-right: 1px solid #c3bfae;
  box-shadow: 1px 0 #fff;
}
.status .s1 {
  width: 67px;
  padding-left: 0;
}
.s2,
.s3 {
  width: 60px;
}
.s4 {
  flex: 330 1 0;
}
.s5 {
  flex: 300 1 0;
}
.s6 {
  width: 80px;
}
.s7 {
  width: 60px;
}
.status span:last-child {
  flex: 153 1 0;
}
.prompt {
  height: 18px;
  margin: 0;
  padding: 2px 7px 0;
  border: 0;
  border-bottom: 2px solid #e6e3d3;
  background: #fff;
  font: 11px var(--ui);
  color: #000;
}
.bottom {
  display: grid;
  grid-template-columns: 799fr 321fr;
  height: 85px;
}
.output {
  display: flex;
  flex-direction: column;
  min-width: 0;
}
.low {
  height: 22px;
}
.low .xtab:last-child {
  height: 18px;
}
.log {
  flex: 1;
  display: flex;
  justify-content: space-between;
  margin-bottom: 2px;
  padding: 6px 6px 6px 8px;
  border: 1px solid #919b9c;
  border-top: 0;
  background:
    linear-gradient(90deg, #fcfcfe 0 77.6%, #8d9aa3 77.6% 77.8%, #d6e4f2 77.8%) top / 100% 5px no-repeat,
    linear-gradient(90deg, #f2f1ea 0 77.6%, #8d9aa3 77.6% 77.8%, #d6e4f2 77.8% 84.300%, #f2f1ea 84.300%) bottom / 100% 5px no-repeat,
    linear-gradient(#d6e4f2, #d6e4f2) top right / 6px 34px no-repeat,
    linear-gradient(#f2f1ea, #f2f1ea) bottom right / 6px 30px no-repeat,
    #fff;
}
.lines {
  flex: 1;
}
.lines p {
  margin: 0;
  line-height: 13px;
}
.scroll {
  display: flex;
  flex-direction: column;
  width: 16px;
  background: #f4f3ee;
}
.scroll button {
  display: flex;
  align-items: center;
  justify-content: center;
  height: 16px;
  border: 1px solid #aec2f4;
  border-radius: 2px;
  background: #c6d6fc;
}
.thumb {
  height: 8px;
  margin: 1px 0 auto;
  border: 1px solid #9ab2ee;
  border-radius: 2px;
  background: #cbdafd;
}
.run {
  min-width: 0;
  margin-left: 1px;
  background: #dfeaf7;
  font-family: var(--ui);
  color: #1e395b;
  text-align: center;
}
.runbtns {
  display: grid;
  grid-template-columns: 1fr 1fr;
  padding: 1px 0;
}
.runbtns button {
  display: flex;
  align-items: center;
  height: 41px;
  padding: 0 36px 0 2px;
  border: 1px solid #7b93b3;
  border-radius: 3px;
  background: linear-gradient(#dbe7f8, #cfdff4 45%, #bdd0e8 55%, #c8d9ee);
  font-weight: bold;
}
.runbtns span {
  flex: 1;
}

/* taskbar */
.taskbar {
  display: flex;
  align-items: stretch;
  height: 30px;
  background: linear-gradient(#3a80f0 0, #2663e0 4px, #235cdc 24px, #1b48b4);
  color: #fff;
}
.start {
  display: flex;
  align-items: center;
  gap: 5px;
  width: 96px;
  padding-left: 10px;
  border-radius: 0 8px 8px 0;
  background: linear-gradient(#6fbf6a 0, #3c9a3c 4px, #379437 22px, #256f27);
  box-shadow: inset -4px 0 4px #246b26;
  font: italic bold 18px/24px 'Open Sans', sans-serif;
  text-shadow: 1px 1px 1px #184a1a;
}
.quick {
  display: flex;
  justify-content: space-between;
  align-items: center;
  width: 176px;
  margin-left: 13px;
}
.tasks {
  flex: 1;
  min-width: 0;
  display: grid;
  grid-template-columns: repeat(5, 1fr);
  gap: 2px;
  margin: 4px 12px 3px 28px;
}
.tasks button {
  display: flex;
  align-items: center;
  gap: 4px;
  min-width: 0;
  padding-left: 9px;
  border-radius: 2px;
  background: linear-gradient(#5a94fa, #3c7cf3 5px, #3a78f0);
}
.tasks .on {
  background: #1c4cac;
  box-shadow: inset 1px 1px 2px #0e2f78;
}
.lang {
  width: 24px;
  line-height: 30px;
}
.tray {
  display: flex;
  align-items: center;
  gap: 3px;
  width: 111px;
  padding-right: 12px;
  background: linear-gradient(#35b0f4 0, #1394ea 5px, #128fe6 24px, #0f70c0);
  box-shadow: inset 1px 0 #0a4fa8;
}
time {
  margin-left: auto;
}
.tray .ico:first-child {
  margin-left: -8px;
}
</style>
